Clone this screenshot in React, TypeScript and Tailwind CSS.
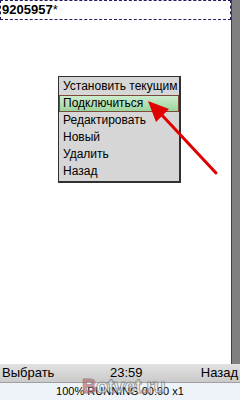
const menuItems = ['Установить текущим', 'Подключиться', 'Редактировать', 'Новый', 'Удалить', 'Назад'];

export default function App() {
  return (
    <div className="relative w-[240px] h-[400px] flex flex-col bg-white overflow-hidden" style={{ fontFamily: '"Liberation Sans", Arial, sans-serif' }}>
      {/* screen + scrollbar */}
      <div className="flex h-[364px]">
        <div className="relative w-[231px] bg-white">
          <div className="h-[20px] border border-dashed border-[#202060] flex items-center pl-[1px] text-[13px] text-black">
            <span className="font-bold">9205957</span>
            <span>*</span>
          </div>

          {/* popup menu */}
          <div className="absolute left-[58px] top-[76px] w-[123px] bg-[#d6d6d6] border border-[#303030] border-r-2 border-b-2 py-[1px] text-[12px] text-black">
            {menuItems.map((item, i) => (
              <div
                key={item}
                className={
                  i === 1
                    ? 'h-[17px] leading-[15px] px-[3px] bg-gradient-to-b from-[#cdeccd] to-[#9cd49c] border border-[#7a4a3a]'
                    : 'h-[17px] leading-[17px] px-[4px] whitespace-nowrap'
                }
              >
                {item}
              </div>
            ))}
          </div>

          {/* red pointer arrow */}
          <svg className="absolute left-0 top-0" width="231" height="364" viewBox="0 0 231 364">
            <line x1="216" y1="173" x2="160" y2="113" stroke="#e00000" strokeWidth="3" strokeLinecap="round" />
            <polygon points="148,101 169,109 156,122" fill="#e00000" />
          </svg>
        </div>
        <div className="w-[9px] bg-[#808080] border-l border-[#404040]" />
      </div>

      {/* soft keys */}
      <div className="relative h-[19px] bg-gradient-to-b from-[#e2e2e2] to-[#cacaca] border-b border-[#a0a0a0] flex items-center justify-between px-[2px] text-[13px] text-black">
        <span>Выбрать</span>
        <span className="absolute left-[110px]">23:59</span>
        <span>Назад</span>
      </div>

      {/* emulator status */}
      <div className="flex-1 bg-[#eef3fa] flex items-center justify-center text-[11px] text-black">
        100% RUNNING 00:00 x1
      </div>

      {/* watermark */}
      <div className="absolute left-[82px] top-[371px] text-[20px] font-bold tracking-tight opacity-70 pointer-events-none" style={{ WebkitTextStroke: '1px #777' }}>
        <span className="text-[#e06060]">B</span>
        <span className="text-[#f4f4f4]">otvet.ru</span>
      </div>
    </div>
  );
}
